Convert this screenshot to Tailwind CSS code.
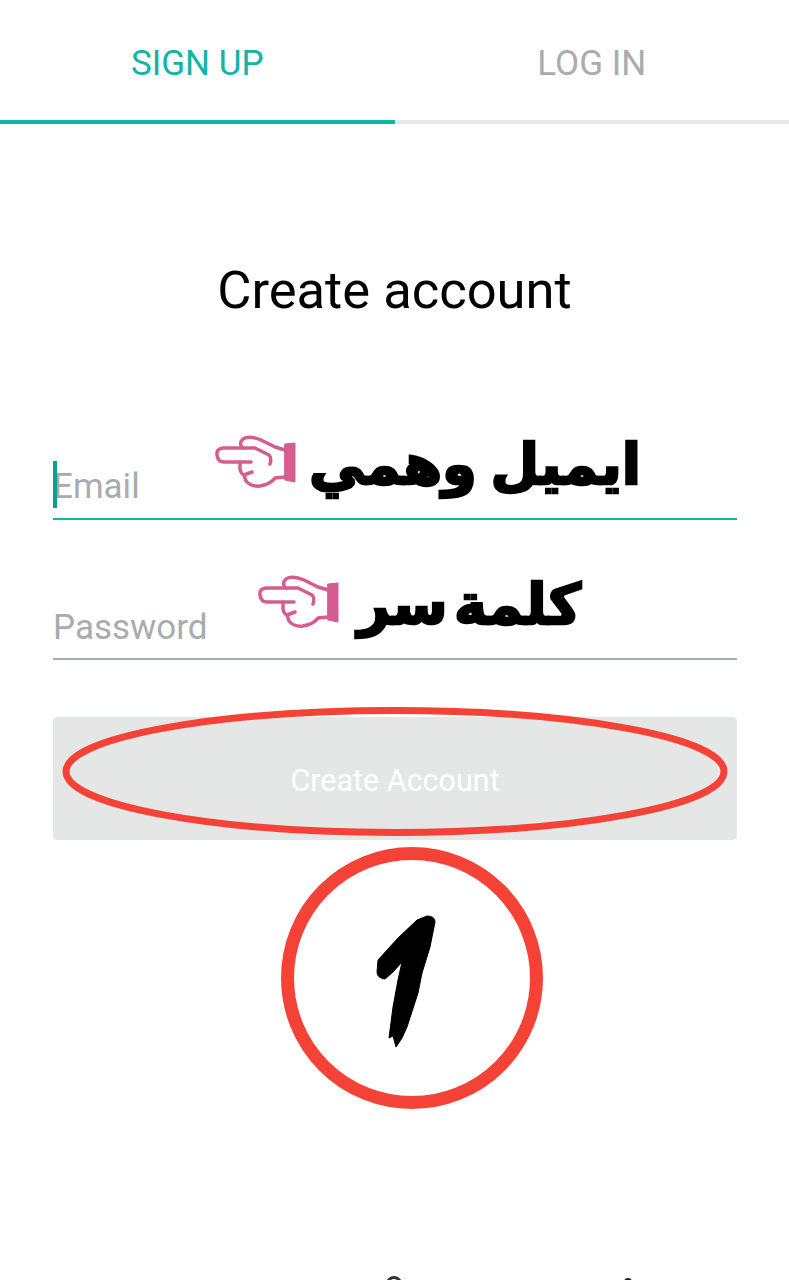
<!DOCTYPE html>
<html lang="en">
<head>
<meta charset="utf-8">
<script src="https://cdn.jsdelivr.net/npm/@tailwindcss/browser@4"></script>
</head>
<body class="bg-white font-['Roboto',sans-serif]">
<div class="relative w-[789px] h-[1280px] overflow-hidden bg-white">
  <div class="flex h-[124px]">
    <div class="w-1/2 flex items-center justify-center border-b-4 border-[#10b5a6] text-[#10b5a6] text-[35px] pt-[9px]">SIGN UP</div>
    <div class="w-1/2 flex items-center justify-center border-b-4 border-[#e6e7e8] text-[#a9acae] text-[35px] pt-[9px]">LOG IN</div>
  </div>
  <h1 class="text-center text-[52.500px] leading-[60px] text-black mt-[136px]">Create account</h1>
  <div class="pl-[53px] pr-[52px] mt-[130px]">
    <div class="relative h-[70px] border-b-2 border-[#10b5a6] flex items-end pb-[11px]">
      <span class="absolute left-0 top-[11px] w-[4px] h-[47px] bg-[#0f9d8f]"></span>
      <span class="text-[35px] leading-[40px] text-[#a9acae]">Email</span>
    </div>
    <div class="relative h-[70px] mt-[70px] border-b-2 border-[#a9acae] flex items-end pb-[10px]">
      <span class="text-[35px] leading-[40px] text-[#a9acae]">Password</span>
    </div>
    <button class="mt-[57px] w-full h-[123px] rounded-[4px] bg-[#e5e7e7] text-white text-[30.500px] flex items-center justify-center pt-[4px]">Create Account</button>
  </div>

  <div dir="rtl" class="absolute left-[241px] top-[425px] w-[400px] text-right text-[56px] leading-[80px] font-bold text-black [-webkit-text-stroke:2.5px_black] [word-spacing:-6px] font-['DejaVu_Sans',sans-serif] whitespace-nowrap">ايميل وهمي</div>
  <div dir="rtl" class="absolute left-[281px] top-[565px] w-[300px] text-right text-[56px] leading-[80px] font-bold text-black [-webkit-text-stroke:2.5px_black] [word-spacing:-13px] font-['DejaVu_Sans',sans-serif] whitespace-nowrap">كلمة سر</div>

  <svg class="absolute left-[215px] top-[435px]" width="82" height="54" viewBox="0 0 82 54" fill="none" stroke="#d65c90" stroke-width="3.5" stroke-linecap="round" stroke-linejoin="round">
    <path d="M70 15 L60 12 L46 5 Q34 0 28 4 Q23 9 28 13 L8 13 Q1 14 2 20 Q3 27 9 27 L25 27 L25 34 Q26 39 29 40 L31 46 Q36 52 45 51 Q56 49 60 43 L70 42"/>
    <path d="M28 13 L40 13 L54 20 Q57 23 55 29"/>
    <path d="M25 27 L36 27 M29 40 L37 37"/>
    <path d="M70 9 L80 8 L80 47 L70 45 Z" fill="#d65c90" stroke-width="1"/>
  </svg>
  <svg class="absolute left-[258px] top-[575px]" width="82" height="54" viewBox="0 0 82 54" fill="none" stroke="#d65c90" stroke-width="3.5" stroke-linecap="round" stroke-linejoin="round">
    <path d="M70 15 L60 12 L46 5 Q34 0 28 4 Q23 9 28 13 L8 13 Q1 14 2 20 Q3 27 9 27 L25 27 L25 34 Q26 39 29 40 L31 46 Q36 52 45 51 Q56 49 60 43 L70 42"/>
    <path d="M28 13 L40 13 L54 20 Q57 23 55 29"/>
    <path d="M25 27 L36 27 M29 40 L37 37"/>
    <path d="M70 9 L80 8 L80 47 L70 45 Z" fill="#d65c90" stroke-width="1"/>
  </svg>

  <svg class="absolute left-[60px] top-[700px]" width="670" height="145" viewBox="0 0 670 145" fill="none">
    <ellipse cx="335" cy="71.500" rx="329" ry="61" stroke="#f44336" stroke-width="7"/>
  </svg>
  <svg class="absolute left-[280px] top-[846px]" width="264" height="264" viewBox="0 0 264 264" fill="none">
    <circle cx="132" cy="132" r="124.500" stroke="#f44336" stroke-width="13"/>
    <path d="M147 70 Q155 70 155 76 L150 101 L142 127 L138 147 L127 181 L122 192 L116 201 L113 190 L109 192 L113 161 L118 134 L122 116 L113 126 L105 133 Q97 132 97 126 L98 114 L118 92 L137 74 Z" fill="#000" stroke="#000" stroke-width="1" stroke-linejoin="round"/>
  </svg>

  <div class="absolute left-[386px] top-[1276px] w-[16px] h-[16px] rounded-full border-[3px] border-[#333]"></div>
  <div class="absolute left-[624px] top-[1278px] w-[8px] h-[8px] rounded-full bg-[#222]"></div>
</div>
</body>
</html>
